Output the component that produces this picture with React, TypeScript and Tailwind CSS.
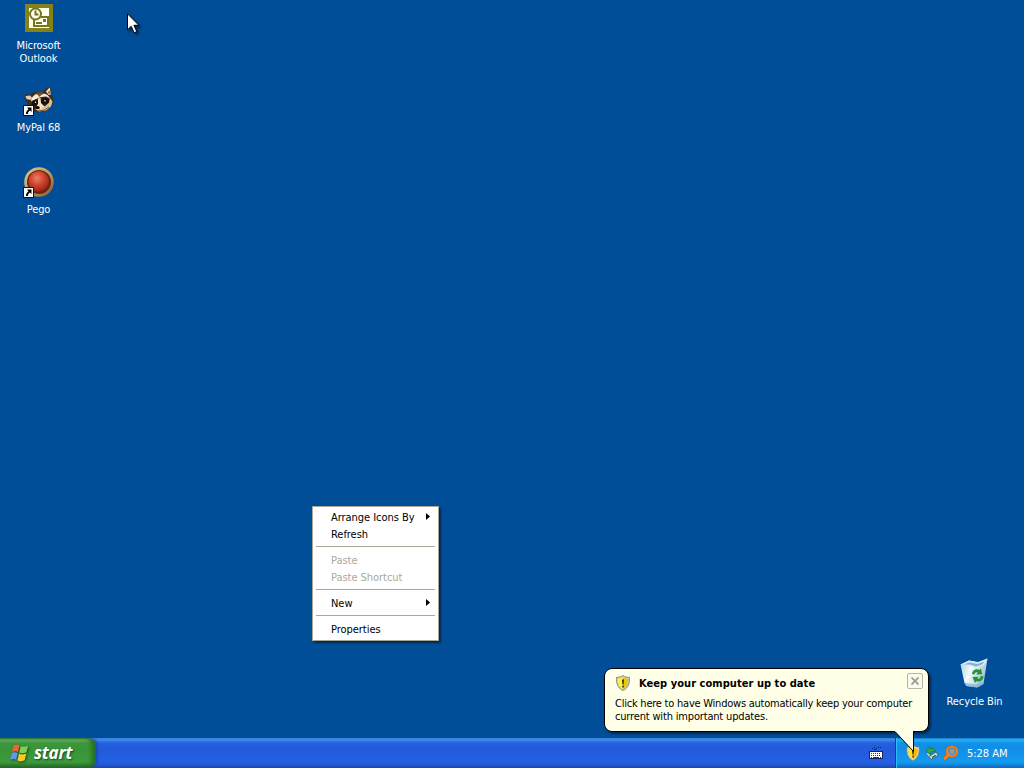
import { ReactNode } from "react";
import clsx from "clsx";

function OutlookIcon() {
  return (
    <svg width="28" height="28" viewBox="0 0 28 28">
      <rect width="28" height="28" fill="#848218" />
      <rect x="4" y="4" width="20" height="20" fill="#fffff0" />
      <rect x="9" y="13" width="14" height="9" fill="#fffff0" stroke="#77751a" strokeWidth="2" />
      <path d="M11 19h6" stroke="#77751a" strokeWidth="2" />
      <rect x="18" y="15" width="3" height="3" fill="#77751a" />
      <circle cx="10.500" cy="10" r="5.500" fill="#fffff0" stroke="#77751a" strokeWidth="2" />
      <path d="M10.500 6.500V10.500h3" fill="none" stroke="#77751a" strokeWidth="2" />
    </svg>
  );
}

function ShortcutArrow() {
  return (
    <g>
      <rect x="0.5" y="21.5" width="10" height="10" fill="#fff" stroke="#111" />
      <path d="M4 23.500h4.500V28L7 26.500C5.500 27.500 5 28.500 4.800 30H3c-.2-2 .8-3.500 2.500-4.800z" fill="#000" />
    </g>
  );
}

function RaccoonIcon() {
  return (
    <svg width="32" height="32" viewBox="0 0 32 32">
      <path d="M1.500 13 2.500 10 7.500 10.500 11 8l9-.5 4-4 3.500-.8 1.200 7.300 2 7-2 5.500-6 4.500-9 1.500-7-4z" fill="#3e2c20" />
      <path d="m2.500 12 4.500-.5 2 2-1.500 2.500-4-1z" fill="#e3d0aa" />
      <path d="m23 7.500 3.800-4.200 1 7.200-2 .5z" fill="#f0dfc0" />
      <path d="m25 9 1.300-3 .5 4z" fill="#5a3f2b" />
      <path d="M8.500 14 12 10.500 18 9l6 1.500 3.500 4-4.500-2-5 .5-5 2-5 2.500z" fill="#f7ecd4" />
      <path d="M12 9.500 17 8l6 1.500-4 1-3 2.500-1-2z" fill="#6c4f35" />
      <path d="m27 14 2.500 3.500-1.500 5-5 4-7 1-4-2.500 6-.5 5-3 3-3z" fill="#dfc295" />
      <path d="m9 17 4.500-1.500 2 2-1 3.500-3 2-3-2z" fill="#17100c" />
      <path d="m17.500 15.500 5-2 3.500 2-.5 3.500-4 2-3.500-1z" fill="#17100c" />
      <path d="m15 14.500 2.500-.5.500 5 3.500 3.500-4 3-3-2-1.500-.5 2-3z" fill="#f3e2c4" />
      <circle cx="22" cy="16.800" r=".8" fill="#fff" />
      <circle cx="12.500" cy="18.200" r=".7" fill="#fff" />
      <ellipse cx="14.500" cy="23.500" rx="2.300" ry="1.600" fill="#080606" />
      <path d="m15 27 6-.8 5-3.200" fill="none" stroke="#7a5a39" />
      <ShortcutArrow />
    </svg>
  );
}

function PegoIcon() {
  return (
    <svg width="32" height="32" viewBox="0 0 32 32">
      <defs>
        <radialGradient id="pego" cx=".42" cy=".35" r=".65">
          <stop offset="0" stopColor="#ee8066" />
          <stop offset=".5" stopColor="#cf4630" />
          <stop offset="1" stopColor="#9c2415" />
        </radialGradient>
        <linearGradient id="pegoRim" x1="0" y1="0" x2="1" y2="1">
          <stop offset="0" stopColor="#d8cb96" />
          <stop offset=".5" stopColor="#c49a5a" />
          <stop offset="1" stopColor="#85542c" />
        </linearGradient>
      </defs>
      <circle cx="16" cy="16" r="14.800" fill="url(#pegoRim)" />
      <circle cx="16" cy="16" r="12" fill="#6d2415" />
      <circle cx="15.700" cy="15.300" r="10.300" fill="url(#pego)" />
      <ShortcutArrow />
    </svg>
  );
}

function RecycleBinIcon() {
  return (
    <svg width="32" height="32" viewBox="0 0 32 32">
      <defs>
        <linearGradient id="bin" x1="0" y1="0" x2="1" y2=".4">
          <stop offset="0" stopColor="#a9c9e6" />
          <stop offset=".45" stopColor="#f3fafc" />
          <stop offset="1" stopColor="#9fc0dc" />
        </linearGradient>
      </defs>
      <path d="M1.500 6.500 10 2.500l9 1.500L28.500.5 24.500 26l-6 3.500-11-1.500-2-3z" fill="url(#bin)" />
      <path d="M1.500 6.500 10 2.500 19 4.500 28.500.5l-2.500 6-8 3.500-7-2z" fill="#d8ebf4" />
      <path d="m4.500 6.500 6-2 8 1.500 7-2.500-2.500 3-6 2-6-2z" fill="#83afd4" />
      <path d="m5 24 4 1.500 8 1 6-3-.5 3-5 3-10-1.500z" fill="#7faee0" opacity=".7" />
      <path d="M13 16c.5-4 4-6 7.500-4l1.300-1.800 1.500 6-6 .3 1.400-1.900c-1.500-.8-3 0-3.200 2z" fill="#22962d" />
      <path d="M24.500 18c-.3 4.500-3.800 6.500-7.300 5.200L16 25l-2.500-6 6-.2-1.200 1.900c1.800.5 3-.3 3.300-2.400z" fill="#22962d" />
    </svg>
  );
}

function ShieldIcon() {
  return (
    <svg width="16" height="16" viewBox="0 0 16 16" className="shrink-0">
      <path d="M8 .5c2 1.500 4 1.800 6.500 1.800.3 6-1 10.700-6.500 13.200C2.500 13 1.200 8.300 1.500 2.300 4 2.300 6 2 8 .5z" fill="#c4c8c8" stroke="#7a7e78" strokeWidth=".8" />
      <path d="M8 2c1.700 1.200 3.300 1.500 5.300 1.500.1 5-1 8.500-5.300 10.800C3.700 12 2.600 8.500 2.700 3.500 4.700 3.500 6.300 3.200 8 2z" fill="#e8c908" />
      <path d="M8 2v12.300C3.700 12 2.600 8.500 2.700 3.500 4.700 3.500 6.300 3.200 8 2z" fill="#fff04a" />
      <path d="M7 4.500h2l-.4 5H7.400z" fill="#332b00" />
      <rect x="7.200" y="10.700" width="1.700" height="1.700" fill="#332b00" />
    </svg>
  );
}

// Tray version of the shield: gold rim, no grey
function TrayShieldIcon() {
  return (
    <svg width="16" height="16" viewBox="0 0 16 16" className="shrink-0">
      <path d="M8 .5c2 1.500 4 1.800 6 1.800.3 6-1 10.700-6 13.200-5-2.500-6.300-7.200-6-13.200C4 2.300 6 2 8 .5z" fill="#f0e6b4" stroke="#a8925a" strokeWidth=".6" />
      <path d="M8 2c1.700 1.200 3.200 1.500 4.800 1.500.1 5-1 8.500-4.800 10.800C4.200 12 3.100 8.500 3.200 3.500 4.800 3.500 6.300 3.200 8 2z" fill="#f5b512" />
      <path d="M8 2v12.300C4.200 12 3.100 8.500 3.200 3.500 4.800 3.500 6.300 3.200 8 2z" fill="#ffe03a" />
      <path d="M7 4.500h2l-.4 5H7.400z" fill="#332b00" />
      <rect x="7.200" y="10.700" width="1.700" height="1.700" fill="#553d00" />
    </svg>
  );
}

function WindowsFlag() {
  return (
    <svg width="20" height="20" viewBox="0 0 20 20" className="drop-shadow-[1px_1px_1px_#174e17]">
      <path d="M3.500 2.500Q6.500.5 9.500 2.500L8 9Q5 7.300 2 9z" fill="#ee6430" />
      <path d="M10.700 3.200Q14 4.700 18 2.700L16.500 9.300Q12.500 11 9.200 9.600z" fill="#7ed052" />
      <path d="M1.700 10.200Q4.700 8.500 7.700 10.200L6.200 16.800Q3.200 15.300.2 16.800z" fill="#6494f4" />
      <path d="M9 10.800Q12.200 12.300 16.200 10.500L14.700 17.200Q10.700 19 7.500 17.500z" fill="#fac92b" />
    </svg>
  );
}

function KeyboardIcon() {
  return (
    <svg width="14" height="14" viewBox="0 0 14 14" shapeRendering="crispEdges">
      <path d="M3 2.500h1M5 1.500h1M7 2.500h1M9 1.500h1M11 1.500h1M5 3.500h2" stroke="#10245f" />
      <rect x="0" y="5" width="14" height="8" fill="#152768" />
      <rect x="1" y="6" width="12" height="6" fill="#fff" />
      <path d="M2 7.500h10M2 9.500h10" stroke="#26366d" strokeDasharray="1 1" />
      <path d="M2 11.500h1M4 11.500h6M11 11.500h1" stroke="#26366d" />
    </svg>
  );
}

function HardwareIcon() {
  return (
    <svg width="16" height="16" viewBox="0 0 16 16">
      <path d="m3.500 8 4 6" stroke="#b9d3d0" strokeWidth="2" />
      <path d="m5 11.500 7-4.500 2.300 3.200-7.300 4.300z" fill="#cfe0dc" stroke="#3c5f66" strokeWidth=".9" />
      <path d="m8 12.500 3.800-2.300" stroke="#315157" strokeWidth="1.300" />
      <path d="M1.500 6 6 1.500v2Q10 2.300 12 6.200 9.500 6 6.500 7.500V9.500z" fill="#2fa84a" stroke="#15743a" strokeWidth=".7" />
    </svg>
  );
}

function SearchIcon() {
  return (
    <svg width="16" height="16" viewBox="0 0 16 16">
      <path d="M5.500 9.500 1.800 13.500" stroke="#a4531c" strokeWidth="4" strokeLinecap="round" />
      <circle cx="9" cy="6.500" r="5" fill="#5b9fd0" stroke="#a4531c" strokeWidth="2.900" />
      <circle cx="9" cy="6.500" r="5" fill="none" stroke="#f08422" strokeWidth="2.200" />
      <path d="M5.500 9.500 1.800 13.500" stroke="#f08422" strokeWidth="2.800" strokeLinecap="round" />
      <path d="M9 5v3" stroke="#d99a5a" strokeWidth="1.200" />
    </svg>
  );
}

const shortcuts = [
  { name: "outlook", lines: ["Microsoft", "Outlook"], icon: <OutlookIcon />, place: "left-0 top-0.5" },
  { name: "mypal", lines: ["MyPal 68"], icon: <RaccoonIcon />, place: "left-0 top-[84px]" },
  { name: "pego", lines: ["Pego"], icon: <PegoIcon />, place: "left-0 top-[166px]" },
  { name: "bin", lines: ["Recycle Bin"], icon: <RecycleBinIcon />, place: "left-[936px] top-[658px]" },
];

function Shortcut({ lines, icon, place }: { lines: string[]; icon: ReactNode; place: string }) {
  return (
    <div className={clsx("absolute flex w-[77px] flex-col items-center text-white", place)}>
      <div className="flex h-8 items-center justify-center">{icon}</div>
      <div className="mt-1 pt-px text-center leading-[13px] tracking-[-0.1px] whitespace-nowrap">
        {lines.map((line) => (
          <div key={line}>{line}</div>
        ))}
      </div>
    </div>
  );
}

function MenuItem({ label, disabled, submenu }: { label: string; disabled?: boolean; submenu?: boolean }) {
  return (
    <div className={clsx("flex h-[17px] items-center justify-between pr-1.5 pl-4 whitespace-nowrap", disabled ? "text-[#aca899]" : "text-black")}>
      <span className="tracking-[-0.04px]">{label}</span>
      {submenu && (
        <svg width="4" height="7" viewBox="0 0 4 7" className="mb-0.5">
          <path d="M0 0v7l4-3.500z" />
        </svg>
      )}
    </div>
  );
}

function Separator() {
  return (
    <div className="h-[9px] px-px pt-[3px]">
      <div className="h-px w-full bg-[#aca899]" />
    </div>
  );
}

function ContextMenu() {
  return (
    <div className="absolute top-[506px] left-[312px] w-[127px] border border-[#aca899] bg-white p-0.5 shadow-[2px_2px_2px_rgba(0,0,0,0.5)]">
      <MenuItem label="Arrange Icons By" submenu />
      <MenuItem label="Refresh" />
      <Separator />
      <MenuItem label="Paste" disabled />
      <MenuItem label="Paste Shortcut" disabled />
      <Separator />
      <MenuItem label="New" submenu />
      <Separator />
      <MenuItem label="Properties" />
    </div>
  );
}

function Balloon() {
  return (
    <div className="absolute top-[668px] left-[604px] h-16 w-[325px] rounded-lg border border-black bg-[#ffffe7] pt-1 pl-2.5 text-black shadow-[2px_2px_2px_rgba(0,0,0,0.45)]">
      <div className="flex h-5 items-center">
        <ShieldIcon />
        <span className="ml-2 font-bold tracking-[0.05px] whitespace-nowrap">Keep your computer up to date</span>
        <div className="mr-[5px] mb-1 ml-auto flex h-4 w-4 items-center justify-center rounded-[2px] border border-[#b5b5a8] bg-[#fbfbed]">
          <svg width="8" height="8" viewBox="0 0 8 8">
            <path d="m.5.5 7 7m0-7-7 7" stroke="#9c9c92" strokeWidth="1.800" />
          </svg>
        </div>
      </div>
      <div className="mt-1 whitespace-nowrap">
        <div className="tracking-[-0.23px]">Click here to have Windows automatically keep your computer</div>
        <div className="tracking-[-0.17px]">current with important updates.</div>
      </div>
      <svg width="24" height="24" viewBox="0 0 24 24" className="absolute top-[61px] left-[289px]">
        <path d="M1 0v1.500l18.500 20V0z" fill="#ffffe7" />
        <path d="M1 1.500l18.500 20V1" fill="none" stroke="#000" />
      </svg>
    </div>
  );
}

function Taskbar() {
  return (
    <div className="flex h-[30px] shrink-0 bg-[linear-gradient(#3f7fe0_0,#3b8af2_2px,#2561dc_5px,#225bdb_10px,#245fe4_24px,#2058cf_27px,#1b47ae_30px)]">
      <div className="flex w-24 items-center gap-1 rounded-r-lg bg-[linear-gradient(#347d34_0,#67b567_2px,#3d963c_5px,#389438_12px,#3c9b3b_24px,#2f8030_27px,#236223_30px)] pl-2.5 shadow-[inset_-4px_0_4px_#246d27,2px_0_2px_#1d4db9]">
        <WindowsFlag />
        <span className="pb-px font-['Open_Sans',sans-serif] text-[17px] leading-none font-bold tracking-[-0.2px] text-white italic [text-shadow:1px_1px_2px_#1b441b]">start</span>
      </div>
      <div className="ml-auto flex w-[26px] items-center">
        <KeyboardIcon />
      </div>
      <div className="flex w-[129px] items-center gap-[3px] border-l border-[#123d91] bg-[linear-gradient(#1671ce_0,#24b5f5_2px,#1290e8_5px,#118de8_10px,#139bee_24px,#1186d3_27px,#095bc9_30px)] pl-[9px] shadow-[inset_1px_0_1px_#35c1f5]">
        <TrayShieldIcon />
        <HardwareIcon />
        <SearchIcon />
        <span className="ml-[5px] tracking-[-0.03px] whitespace-nowrap text-white">5:28 AM</span>
      </div>
    </div>
  );
}

export default function App() {
  return (
    <div className="relative flex h-screen w-full flex-col overflow-hidden bg-[#004e98] font-['DejaVu_Sans_Condensed','DejaVu_Sans',sans-serif] text-[11px] leading-[13px] select-none">
      <div className="flex-1">
        {shortcuts.map((item) => (
          <Shortcut key={item.name} {...item} />
        ))}
      </div>
      <Taskbar />
      <ContextMenu />
      <Balloon />
      <svg width="14" height="22" viewBox="0 0 14 22" className="absolute top-[13px] left-[127px] drop-shadow-[2px_2px_1px_rgba(0,0,0,0.5)]">
        <path d="M.5.8v16l3.700-3.500 3 6.500 2.600-1.200-2.900-6.300h5z" fill="#fff" stroke="#000" />
      </svg>
    </div>
  );
}
